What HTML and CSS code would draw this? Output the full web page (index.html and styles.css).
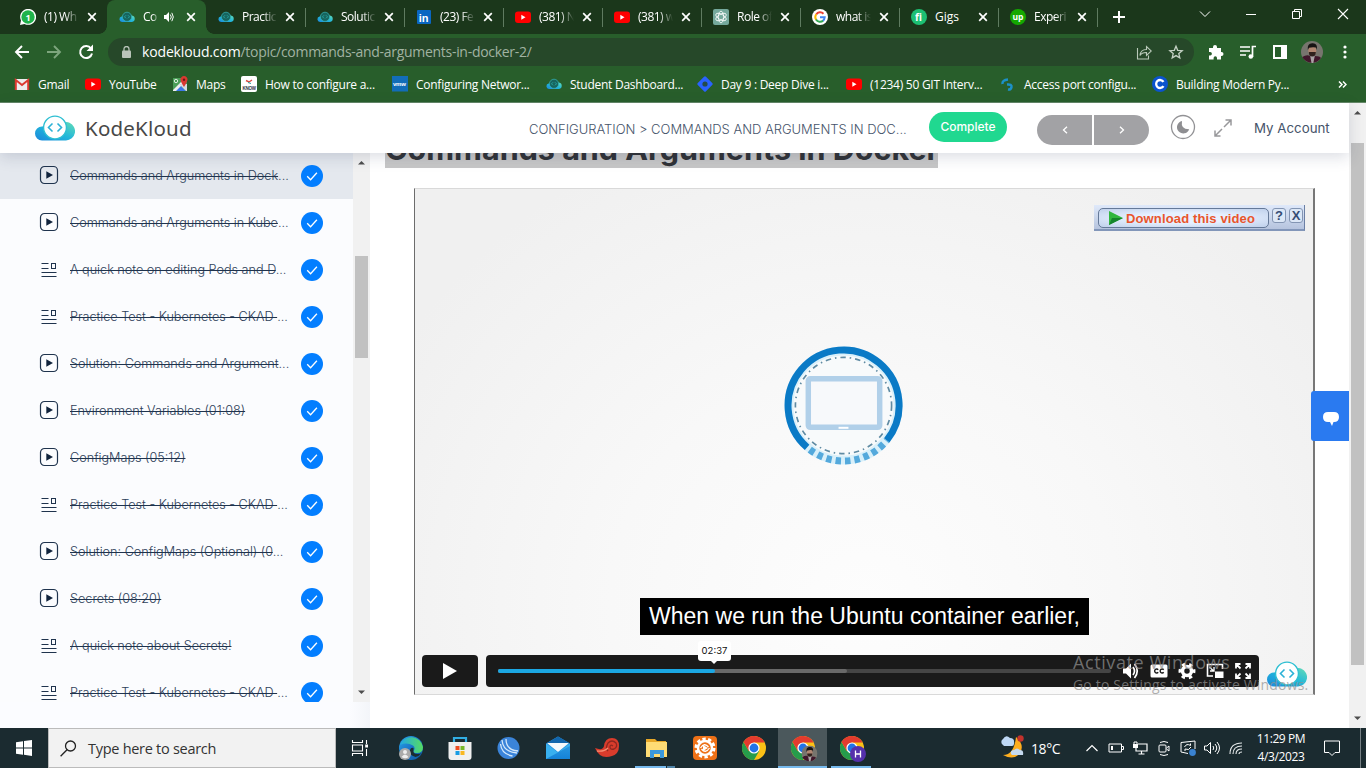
FILE: index.html
```html
<!DOCTYPE html>
<html lang="en">
<head>
<meta charset="utf-8">
<title>Commands and Arguments in Docker - KodeKloud</title>
<link rel="stylesheet" href="styles.css">
</head>
<body>
<svg class="defs" aria-hidden="true">
  <defs>
    <linearGradient id="g1" x1="0" y1="1" x2="1" y2="0"><stop offset="0" stop-color="#1b87dc"/><stop offset=".5" stop-color="#22b7da"/><stop offset="1" stop-color="#63dcb6"/></linearGradient>
    <linearGradient id="mb" x1="0" y1="0" x2="0" y2="1"><stop offset="0" stop-color="#35a5e8"/><stop offset="1" stop-color="#1583d8"/></linearGradient>
    <linearGradient id="eg" x1="0" y1="0" x2="1" y2="1"><stop offset="0" stop-color="#28a9e8"/><stop offset=".5" stop-color="#1a73c8"/><stop offset="1" stop-color="#0c59a4"/></linearGradient>
    <linearGradient id="eg2" x1="0" y1="0" x2="1" y2="0"><stop offset="0" stop-color="#22a8e4"/><stop offset="1" stop-color="#56dc62"/></linearGradient>
    <symbol id="x" viewBox="0 0 10 10"><path d="M1.200 1.200l7.600 7.600M8.800 1.200L1.200 8.800" stroke="#fff" stroke-width="1.700"/></symbol>
    <symbol id="cloud" viewBox="0 0 40 26"><path d="M7 25.500A7 7 0 0 1 7 11.500q2-.5 4 .5L29 7.500q3-1 5.500.2A9.300 9.300 0 0 1 31 25.500z" fill="url(#g1)"/><circle cx="20" cy="12.500" r="11.400" fill="#fff" stroke="#2dbfd2" stroke-width="1.300"/><path d="M17.500 8.500l-4 4 4 4M22.500 8.500l4 4-4 4" fill="none" stroke="#2bb1d6" stroke-width="1.600"/></symbol>
    <symbol id="kk" viewBox="0 0 16 12"><path d="M3 11a2.800 2.800 0 0 1-.5-5.500h1Q12 4 13 4.500a3.300 3.300 0 0 1 0 6.500z" fill="url(#g1)"/><circle cx="8" cy="5.800" r="4.600" fill="#17655f" stroke="#36b5b9" stroke-width=".7"/><path d="M7 4.300L5.500 5.800 7 7.300M9 4.300l1.500 1.500L9 7.300" fill="none" stroke="#2ab4ae" stroke-width=".8"/></symbol>
    <symbol id="yt" viewBox="0 0 16 16"><rect y="2.500" width="16" height="11.500" rx="3" fill="#f00"/><path d="M6.300 5.700l4.200 2.500-4.200 2.500z" fill="#fff"/></symbol>
    <symbol id="play" viewBox="0 0 20 20"><rect x="1.500" y="1.500" width="17" height="17" rx="4" fill="none" stroke="#1f334d" stroke-width="1.200"/><path d="M7.300 6.200l6.700 3.800-6.700 3.800z" fill="#10233c"/></symbol>
    <symbol id="note" viewBox="0 0 20 20"><path d="M2.500 4.500h7M2.500 9.500h7M2.500 13.500h15M2.500 17.500h15" stroke="#1f334d" stroke-width="1.100"/><rect x="12.500" y="4.500" width="4" height="5" fill="none" stroke="#1f334d"/></symbol>
    <symbol id="tick" viewBox="0 0 22 22"><circle cx="11" cy="11" r="11" fill="#037eff"/><path d="M6.200 11.300l3.400 3.500 6.300-7" fill="none" stroke="#fff" stroke-width="1.300"/></symbol>
    <symbol id="chrome" viewBox="0 0 24 24"><circle cx="12" cy="12" r="12" fill="#fbc116"/><path d="M1.600 6A12 12 0 0 0 12 24l5.200-9L12 12 6.800 15z" fill="#269c4b"/><path d="M1.600 6L6.800 15 12 6.500h10.600A12 12 0 0 0 1.600 6z" fill="#e33b2e"/><circle cx="12" cy="12" r="5.600" fill="#fff"/><circle cx="12" cy="12" r="4.400" fill="#2273e6"/></symbol>
    <symbol id="face" viewBox="0 0 22 22"><circle cx="11" cy="11" r="11" fill="#77756e"/><path d="M1.200 16Q6 13 9 15h5q5 0 6 2a11 11 0 0 1-18.800-1z" fill="#41172b"/><path d="M9 14l1.500 8h1.800L14 14z" fill="#a9a3a5"/><ellipse cx="11.300" cy="9.500" rx="4" ry="5.400" fill="#b08570"/><path d="M6.800 9Q6 2 11.500 2.200 17 2 15.800 9L15 6.500Q11 6 8 6.800z" fill="#171313"/><path d="M7.800 11q3.500 0 7 0 0 4.500-3.500 4.500T7.800 11z" fill="#30211d"/></symbol>
    <symbol id="up" viewBox="0 0 9 5"><path d="M1 4.500L4.500 1 8 4.500z" fill="#4d4d4d"/></symbol>
    <symbol id="down" viewBox="0 0 9 5"><path d="M1 .5h7L4.500 4z" fill="#4d4d4d"/></symbol>
  </defs>
</svg>

<div class="tabs">
  <div class="tab first"><svg class="fav" viewBox="0 0 16 16"><path d="M0 16l1-4.500A8 8 0 1 1 4.500 15z" fill="#fff"/><circle cx="8" cy="8" r="6.700" fill="#20b34b"/><text x="5.500" y="11.500" class="wa">1</text></svg><span class="label">(1) Wh</span><svg class="close"><use href="#x"/></svg></div>
  <div class="tab active"><svg class="fav"><use href="#kk"/></svg><span class="label">Co</span><svg class="speaker" viewBox="0 0 10 10"><path d="M0 3h2l3-3v10L2 7H0z" fill="#fff"/><path d="M6.300 2.500q2 2.500 0 5M7.800 .8q3 4.200 0 8.400" fill="none" stroke="#fff"/></svg><svg class="close"><use href="#x"/></svg></div>
  <div class="tab"><svg class="fav"><use href="#kk"/></svg><span class="label">Practic</span><svg class="close"><use href="#x"/></svg></div>
  <div class="tab sep"><svg class="fav"><use href="#kk"/></svg><span class="label">Solutic</span><svg class="close"><use href="#x"/></svg></div>
  <div class="tab sep"><svg class="fav" viewBox="0 0 16 16"><rect x="1" y="1" width="14" height="14" rx="1" fill="#0a66c2"/><text x="2.800" y="12.500" class="li">in</text></svg><span class="label">(23) Fe</span><svg class="close"><use href="#x"/></svg></div>
  <div class="tab sep"><svg class="fav"><use href="#yt"/></svg><span class="label">(381) N</span><svg class="close"><use href="#x"/></svg></div>
  <div class="tab sep"><svg class="fav"><use href="#yt"/></svg><span class="label">(381) w</span><svg class="close"><use href="#x"/></svg></div>
  <div class="tab sep"><svg class="fav" viewBox="0 0 16 16"><rect width="16" height="16" rx="2" fill="#75a99c"/><g fill="none" stroke="#fff" stroke-width=".8"><ellipse cx="8" cy="8" rx="2.700" ry="5.800"/><ellipse cx="8" cy="8" rx="2.700" ry="5.800" transform="rotate(60 8 8)"/><ellipse cx="8" cy="8" rx="2.700" ry="5.800" transform="rotate(120 8 8)"/></g></svg><span class="label">Role of</span><svg class="close"><use href="#x"/></svg></div>
  <div class="tab sep"><svg class="fav" viewBox="0 0 16 16"><circle cx="8" cy="8" r="8" fill="#fff"/><g fill="none" stroke-width="2"><path d="M4.200 5.500A4.700 4.700 0 0 1 11.500 4.700" stroke="#ea4335"/><path d="M4.200 5.200A5 5 0 0 0 4.200 10.800" stroke="#fbbc05"/><path d="M4 10.500A4.700 4.700 0 0 0 11.200 11.500" stroke="#34a853"/><path d="M8 8.200h4.700Q12.500 10.500 11 11.700" stroke="#4285f4"/></g></svg><span class="label">what is</span><svg class="close"><use href="#x"/></svg></div>
  <div class="tab sep"><svg class="fav" viewBox="0 0 16 16"><circle cx="8" cy="8" r="8" fill="#1dbf73"/><text x="4" y="12" class="badge">fi</text></svg><span class="label">Gigs</span><svg class="close"><use href="#x"/></svg></div>
  <div class="tab sep"><svg class="fav" viewBox="0 0 16 16"><circle cx="8" cy="8" r="8" fill="#14a800"/><text x="2.500" y="10.500" class="badge small">up</text></svg><span class="label">Experi</span><svg class="close"><use href="#x"/></svg></div>
  <div class="newtab sep"><svg width="12" height="12" viewBox="0 0 12 12"><path d="M6 0v12M0 6h12" stroke="#fff" stroke-width="2"/></svg></div>
  <div class="wincontrols">
    <svg viewBox="0 0 12 12"><path d="M1 3.500l5 5 5-5" fill="none" stroke="#fff"/></svg>
    <svg viewBox="0 0 12 12"><path d="M1 6.500h10" stroke="#fff"/></svg>
    <svg viewBox="0 0 12 12"><path d="M1.500 3.500h7v7h-7zM3.500 3.500v-2h7v7h-2" fill="none" stroke="#fff"/></svg>
    <svg viewBox="0 0 12 12"><path d="M1 1l10 10M11 1L1 11" stroke="#fff" stroke-width="1.100"/></svg>
  </div>
</div>

<div class="toolbar">
  <svg class="nav" viewBox="0 0 16 16"><path d="M15 8H2M8 2L2 8l6 6" fill="none" stroke="#fff" stroke-width="1.900"/></svg>
  <svg class="nav" viewBox="0 0 16 16"><path d="M1 8h13M8 2l6 6-6 6" fill="none" stroke="#7da57d" stroke-width="1.900"/></svg>
  <svg class="nav" viewBox="0 0 16 16"><path d="M13 4.500A6 6 0 1 0 14 9.500" fill="none" stroke="#fff" stroke-width="2"/><path d="M15 .5V7H8.500z" fill="#fff"/></svg>
  <div class="omnibox">
    <svg class="lock" viewBox="0 0 10 12"><rect y="4.500" width="9" height="7.500" rx="1" fill="#b9c4b9"/><path d="M2 5V3a2.500 2.500 0 0 1 5 0v2" fill="none" stroke="#b9c4b9" stroke-width="1.300"/></svg>
    <span class="url"><b>kodekloud.com</b>/topic/commands-and-arguments-in-docker-2/</span>
    <svg class="oi" viewBox="0 0 16 16"><path d="M1.500 4v11h11v-3.500M4 11.500q.5-6 6.500-6V2.500l4.800 4.500-4.800 4.500V8.500Q6 8.300 4 11.500z" fill="none" stroke="#b9c9b9" stroke-width="1.100"/></svg>
    <svg class="oi" viewBox="0 0 16 16"><path d="M8 2.200l1.700 4.100 4.500.4-3.400 2.900 1 4.300L8 11.600l-3.800 2.300 1-4.300-3.400-2.900 4.500-.4z" fill="none" stroke="#c5d2c5" stroke-width="1.300"/></svg>
  </div>
  <svg class="ext" viewBox="0 0 16 16"><path d="M1 4h4V3a2 2 0 0 1 4 0v1h4v4h.5a2 2 0 0 1 0 4H13v3.500H9V14a1.700 1.700 0 0 0-3.400 0v1.500H1v-4h1.200a1.700 1.700 0 0 0 0-3.400H1z" fill="#fff"/></svg>
  <svg class="ext" viewBox="0 0 16 16"><path d="M0 3h10M0 7h10M0 11h6M12.500 13V2.500H16" fill="none" stroke="#fff" stroke-width="1.700"/><circle cx="10.800" cy="12.500" r="2.300" fill="#fff"/></svg>
  <svg class="ext" viewBox="0 0 16 16"><path d="M1 1h14v14H1zM3 3v10h6V3z" fill="#fff" fill-rule="evenodd"/></svg>
  <svg class="avatar"><use href="#face"/></svg>
  <svg class="dots" viewBox="0 0 4 16"><circle cx="2" cy="3" r="1.600" fill="#fff"/><circle cx="2" cy="8" r="1.600" fill="#fff"/><circle cx="2" cy="13" r="1.600" fill="#fff"/></svg>
</div>

<div class="bookmarks">
  <div class="bm"><svg viewBox="0 0 16 16"><rect x="1" y="3" width="14" height="11" fill="#eee"/><path d="M1.800 14V4L8 9l6.200-5v10" fill="none" stroke="#db3a30" stroke-width="2"/></svg><span>Gmail</span></div>
  <div class="bm"><svg><use href="#yt"/></svg><span>YouTube</span></div>
  <div class="bm"><svg viewBox="0 0 16 16"><path d="M1 2h14v13H1z" fill="#4b9e58"/><path d="M2 15l6-6 6 6z" fill="#3b78e7"/><path d="M1 14L10 5l2 2-8 8H1z" fill="#eee"/><path d="M7 8l7 7h1V8z" fill="#d5dbe0"/><path d="M12 0a3.500 3.500 0 0 1 3.500 3.800Q15 7 12 11 9 7 8.500 3.800A3.500 3.500 0 0 1 12 0z" fill="#d93930"/><circle cx="12" cy="3.700" r="1.200" fill="#6c1915"/><circle cx="4" cy="5" r="1.700" fill="none" stroke="#fff" stroke-width=".8"/></svg><span>Maps</span></div>
  <div class="bm"><svg viewBox="0 0 16 16"><rect width="16" height="16" rx="2" fill="#fff"/><path d="M5 4.500l3 1.500 3-2" stroke="#d84b43" stroke-width="1.500" fill="none"/><path d="M7 6.500l3 1" stroke="#229b95"/><text x="1.500" y="13.500" class="know">KNOW</text></svg><span>How to configure a...</span></div>
  <div class="bm"><svg viewBox="0 0 16 16"><rect width="16" height="15.500" fill="#126db8"/><text x="1" y="10" class="vmw">vmw</text></svg><span>Configuring Networ...</span></div>
  <div class="bm"><svg><use href="#kk"/></svg><span>Student Dashboard...</span></div>
  <div class="bm"><svg viewBox="0 0 16 16"><path d="M7 .8Q8-.2 9 .8L15.200 7q1 1 0 2L9 15.200q-1 1-2 0L.8 9Q-.2 8 .8 7z" fill="#2962ff"/><circle cx="8" cy="8" r="2.600" fill="#244b4b"/></svg><span>Day 9 : Deep Dive i...</span></div>
  <div class="bm"><svg><use href="#yt"/></svg><span>(1234) 50 GIT Interv...</span></div>
  <div class="bm"><svg viewBox="0 0 16 16"><path d="M2.500 8Q2 4 8 3.500M7 8.500q5-.5 4.500 2.500T8 13.500" stroke="#1c91c9" stroke-width="2.500" fill="none"/></svg><span>Access port configu...</span></div>
  <div class="bm"><svg viewBox="0 0 16 16"><circle cx="8" cy="8" r="8" fill="#0a53ce"/><path d="M11.500 5.800A4 4 0 1 0 11.500 10.200" fill="none" stroke="#fff" stroke-width="2.300"/></svg><span>Building Modern Py...</span></div>
  <div class="more"><svg width="9" height="7" viewBox="0 0 9 7"><path d="M1 .5l3 3-3 3M5 .5l3 3-3 3" fill="none" stroke="#fff" stroke-width="1.500"/></svg></div>
</div>

<div class="page">
  <div class="site">
    <header class="header">
      <svg class="logo"><use href="#cloud"/></svg>
      <span class="brand">KodeKloud</span>
      <span class="crumb">CONFIGURATION &gt; COMMANDS AND ARGUMENTS IN DOC...</span>
      <span class="complete">Complete</span>
      <span class="pn prev"><svg viewBox="0 0 6 8"><path d="M5 .7L1.500 4 5 7.300" fill="none" stroke="#fff" stroke-width="1.300"/></svg></span>
      <span class="pn next"><svg viewBox="0 0 6 8"><path d="M1 .7L4.500 4 1 7.300" fill="none" stroke="#fff" stroke-width="1.300"/></svg></span>
      <svg class="moon" viewBox="0 0 26 26"><circle cx="13" cy="13" r="11.500" fill="none" stroke="#929295" stroke-width="1.300"/><path d="M12 7a6.300 6.300 0 1 0 7.200 8.300Q10.500 15.500 12 7z" fill="#8e8e91"/></svg>
      <svg class="expand" viewBox="0 0 18 18"><path d="M10 8l7-7M11.500 1H17v5.500M8 10l-7 7M1 11.500V17h5.500" fill="none" stroke="#98989b" stroke-width="1.500"/></svg>
      <span class="account">My Account</span>
    </header>
    <div class="content">
      <aside class="sidebar">
        <div class="lessons">
          <ul class="list">
            <li class="current"><svg class="kind"><use href="#play"/></svg><span class="t"><s>Commands and Arguments in Dock</s>...</span><svg class="tick"><use href="#tick"/></svg></li>
            <li><svg class="kind"><use href="#play"/></svg><span class="t"><s>Commands and Arguments in Kube</s>...</span><svg class="tick"><use href="#tick"/></svg></li>
            <li><svg class="kind"><use href="#note"/></svg><span class="t"><s>A quick note on editing Pods and D</s>...</span><svg class="tick"><use href="#tick"/></svg></li>
            <li><svg class="kind"><use href="#note"/></svg><span class="t"><s>Practice Test - Kubernetes - CKAD </s>...</span><svg class="tick"><use href="#tick"/></svg></li>
            <li><svg class="kind"><use href="#play"/></svg><span class="t"><s>Solution: Commands and Argument</s>...</span><svg class="tick"><use href="#tick"/></svg></li>
            <li><svg class="kind"><use href="#play"/></svg><span class="t"><s>Environment Variables (01:08)</s></span><svg class="tick"><use href="#tick"/></svg></li>
            <li><svg class="kind"><use href="#play"/></svg><span class="t"><s>ConfigMaps (05:12)</s></span><svg class="tick"><use href="#tick"/></svg></li>
            <li><svg class="kind"><use href="#note"/></svg><span class="t"><s>Practice Test - Kubernetes - CKAD </s>...</span><svg class="tick"><use href="#tick"/></svg></li>
            <li><svg class="kind"><use href="#play"/></svg><span class="t"><s>Solution: ConfigMaps (Optional) (0</s>...</span><svg class="tick"><use href="#tick"/></svg></li>
            <li><svg class="kind"><use href="#play"/></svg><span class="t"><s>Secrets (08:20)</s></span><svg class="tick"><use href="#tick"/></svg></li>
            <li><svg class="kind"><use href="#note"/></svg><span class="t"><s>A quick note about Secrets!</s></span><svg class="tick"><use href="#tick"/></svg></li>
            <li><svg class="kind"><use href="#note"/></svg><span class="t"><s>Practice Test - Kubernetes - CKAD </s>...</span><svg class="tick"><use href="#tick"/></svg></li>
          </ul>
          <div class="scroll inner"><svg class="arr"><use href="#up"/></svg><div class="thumb"></div><svg class="arr end"><use href="#down"/></svg></div>
        </div>
      </aside>
      <main class="main">
        <div class="titlebox"><h1>Commands and Arguments in Docker</h1></div>
        <div class="video">
          <svg class="art" viewBox="0 0 120 120">
            <circle cx="60" cy="60" r="55" fill="#f8fafb" stroke="#d9f0fa" stroke-width="9"/>
            <path d="M23.300 102.200A56 56 0 1 1 103.600 95.200" fill="none" stroke="#0a7ac6" stroke-width="7"/>
            <path d="M26 104.500A56 56 0 0 0 103.600 95.200" fill="none" stroke="#54a9dc" stroke-width="7" stroke-dasharray="5.500 4"/>
            <circle cx="60" cy="60" r="48.500" fill="none" stroke="#5f8ba3" stroke-width="1.700" stroke-dasharray="5.500 4 1.500 4"/>
            <rect x="24.500" y="33" width="72" height="49" rx="2" fill="#f7f9fb" stroke="#b1d0e9" stroke-width="5.500"/><path d="M55 82.500h10" stroke="#fff" stroke-width="2"/>
          </svg>
          <div class="download">
            <div class="dl"><svg viewBox="0 0 14 14"><path d="M0 0l14 7L0 14z" fill="#30b63e"/><path d="M3 7h11L0 14z" fill="#15852c"/></svg><span>Download this video</span></div>
            <span class="sq">?</span><span class="sq">X</span>
          </div>
          <div class="caption">When we run the Ubuntu container earlier,</div>
          <div class="controls">
            <div class="playbtn"><svg viewBox="0 0 14 16"><path d="M0 0l14 8L0 16z" fill="#fff"/></svg></div>
            <div class="bar">
              <div class="track"><div class="loaded"></div><div class="played"></div><div class="time">02:37</div></div>
              <svg viewBox="0 0 18 18"><path d="M1 6.500h3l5-5v15l-5-5H1z" fill="#fff"/><path d="M11 5q3 4 0 8M12.500 2q5.500 7 0 14" fill="none" stroke="#fff" stroke-width="1.700"/></svg>
              <svg viewBox="0 0 18 18"><rect x=".5" y="2.500" width="17" height="13" rx="1.500" fill="#fff"/><path d="M8.200 7.700a2 2 0 1 0 0 2.600M13.700 7.700a2 2 0 1 0 0 2.600" fill="none" stroke="#1a1a1a" stroke-width="1.400"/></svg>
              <svg viewBox="0 0 18 18"><circle cx="9" cy="9" r="4.500" fill="none" stroke="#fff" stroke-width="3.500"/><circle cx="9" cy="9" r="7" fill="none" stroke="#fff" stroke-width="3" stroke-dasharray="3.500 3.830" transform="rotate(-14 9 9)"/></svg>
              <svg viewBox="0 0 18 18"><path d="M7 14H1.500V2.500h15V7" fill="none" stroke="#fff" stroke-width="1.600"/><path d="M9 9.500h8.500V16H9z" fill="#fff"/><path d="M3.500 5l4 4M8 5v4H4" stroke="#fff" fill="none" stroke-width="1.300"/></svg>
              <svg viewBox="0 0 18 18"><path d="M2 6.500V2h4.500M11.500 2H16v4.500M16 11.500V16h-4.500M6.500 16H2v-4.500M2 2l4.500 4.500M16 2l-4.500 4.500M16 16l-4.500-4.500M2 16l4.500-4.500" fill="none" stroke="#fff" stroke-width="1.800"/></svg>
            </div>
            <svg class="vlogo"><use href="#cloud"/></svg>
          </div>
        </div>
      </main>
    </div>
    <div class="chat"><svg viewBox="0 0 16 15"><path d="M5 0h6q5 0 5 5t-5 5H10.500L9 14 7 10H5Q0 10 0 5t5-5z" fill="#fff"/></svg></div>
  </div>
  <div class="scroll outer"><svg class="arr"><use href="#up"/></svg><div class="thumb"></div><svg class="arr end"><use href="#down"/></svg></div>
  <div class="activate"><div class="a1">Activate Windows</div><div class="a2">Go to Settings to activate Windows.</div></div>
</div>

<div class="taskbar">
  <div class="start"><svg width="16" height="16" viewBox="0 0 16 16"><path d="M0 2.300l7-1v6.300H0zM8 1.100L16 0v7.600H8zM0 8.500h7v6.300l-7-1zM8 8.500h8V16l-8-1.200z" fill="#fff"/></svg></div>
  <div class="search"><svg width="17" height="17" viewBox="0 0 17 17"><circle cx="10.500" cy="6" r="5" fill="none" stroke="#222" stroke-width="1.300"/><path d="M7 9.800L.6 16.300" stroke="#222" stroke-width="1.300"/></svg><span>Type here to search</span></div>
  <div class="apps">
    <div class="app"><svg class="tv" viewBox="0 0 16 16"><path d="M.5 0v2.500h10V0M.5 5h10v6H.5zM.5 16v-2.500h10V16M14.500 0v4M14.500 9v7" fill="none" stroke="#fff" stroke-width="1.100"/><rect x="13.200" y="4.500" width="2.800" height="3" fill="#fff"/></svg></div>
    <div class="app"><svg viewBox="0 0 24 24"><circle cx="12" cy="12" r="12" fill="url(#eg)"/><path d="M1 9A12 12 0 0 1 24 11q0 6-6 6-4 0-3.500-2 2.500-3-.5-5.500Q8 6 1 9z" fill="url(#eg2)"/><path d="M14.500 14q-1 4 4 4 3 0 4-1-2 3-6 4-7-2-5.500-7 1-3 3.500-2z" fill="#1b2c31"/><circle cx="6" cy="18" r="6" fill="#aaa"/><circle cx="6" cy="16" r="2" fill="#eee"/><path d="M2.500 21q3.500-5 7 0-3 2.500-7 0z" fill="#eee"/></svg></div>
    <div class="app"><svg viewBox="0 0 24 24"><path d="M6 7V2h12v5" fill="none" stroke="#31aee3" stroke-width="2.200"/><path d="M.5 6h23v15q0 3-3 3h-17q-3 0-3-3z" fill="#f0f0f0"/><path d="M7.500 10h4v4h-4z" fill="#ef4e23"/><path d="M12.500 10h4v4h-4z" fill="#79b829"/><path d="M7.500 15h4v4h-4z" fill="#199de4"/><path d="M12.500 15h4v4h-4z" fill="#f9b820"/></svg></div>
    <div class="app"><svg viewBox="0 0 24 24"><circle cx="11.500" cy="12" r="11" fill="#3b84d9"/><path d="M5 4q1 12 15 13M9 3q0 11 12 12M3.500 8q1 10 12 12" fill="none" stroke="#d4e8fb" stroke-width="1.300"/></svg></div>
    <div class="app"><svg viewBox="0 0 24 24"><path d="M0 7.500l12-7 12 7V23H0z" fill="url(#mb)"/><path d="M0 7.500l12-7 12 7-1 .5H1z" fill="#1266ad"/><path d="M1 7h22L12 16z" fill="#f5f9fc"/><path d="M0 7.500l12 9 12-9V10L0 23z" fill="#39b0ef"/></svg></div>
    <div class="app"><svg viewBox="0 0 24 24"><path d="M0 12q8 3 9-2 1-8 8-8t7 8-7 10Q5 24 0 12z" fill="#d93c2c"/><path d="M18 10q-3-2-3 1t4 2q4-2 2-6-4-4-8 0-3 5 0 8" fill="none" stroke="#8d2820" stroke-width="1.300"/><path d="M2 15q7 1 11-3" fill="none" stroke="#f58d72" stroke-width="1.300"/></svg></div>
    <div class="app folder"><svg viewBox="0 0 24 24"><path d="M2 3h9l2 2h9v4H2z" fill="#e8a828"/><path d="M2 6h21v15H2z" fill="#ffdc75"/><path d="M6 22v-8h14v8h-4v-4h-6v4z" fill="#3b98dc"/></svg></div>
    <div class="app"><svg viewBox="0 0 24 24"><rect width="24" height="24" rx="4" fill="#ee7117"/><circle cx="12" cy="12" r="9" fill="none" stroke="#fff" stroke-width="3" stroke-dasharray="3.300 2.350"/><circle cx="12" cy="12" r="7" fill="#ee7117" stroke="#fff" stroke-width="2.500"/><path d="M7.500 12q4-6 8-1M16.500 12q-4 6-8 1" fill="none" stroke="#fff" stroke-width="1.300"/><path d="M10 9l5 3-5 3z" fill="#fff"/></svg></div>
    <div class="app"><svg><use href="#chrome"/></svg></div>
    <div class="app on"><svg viewBox="0 0 24 24"><use href="#chrome" width="24" height="24"/><use href="#face" x="10.500" y="9.500" width="16" height="16"/></svg></div>
    <div class="app run"><svg viewBox="0 0 24 24"><use href="#chrome" width="24" height="24"/><circle cx="18" cy="18" r="8" fill="#5530ab"/><path d="M15.500 14.500v7M20.500 14.500v7M15.500 18h5" stroke="#fff" stroke-width="1.300"/></svg></div>
  </div>
  <div class="tray">
    <svg class="weather" viewBox="0 0 25 24"><path d="M17 2q9 8 4 16-6 8-17 2 11 0 13-18z" fill="#ffae1f"/><circle cx="21.500" cy="3.500" r="3.200" fill="#c3322c"/><path d="M4 10a3.500 3.500 0 0 1 0-6Q7-1 11 3q5 0 4 6 0 2-2 2H5z" fill="#bed8f5"/><path d="M12 19q-1-4 3-4 3-3 6 0 4 0 3 5H13z" fill="#c5d9ef"/></svg>
    <span class="temp">18°C</span>
    <svg class="ti" viewBox="0 0 16 16"><path d="M2.500 11L8 5.500l5.500 5.500" fill="none" stroke="#fff" stroke-width="1.200"/></svg>
    <svg class="ti" viewBox="0 0 16 16"><path d="M1 4h12.500v8H1zM14 6.500h1.500v3H14" fill="none" stroke="#fff"/><path d="M3 6h2v4H3z" fill="#fff"/></svg>
    <svg class="ti" viewBox="0 0 16 16"><path d="M6 4h9v7H4V8M9.500 11v3M6.500 14h6" fill="none" stroke="#fff" stroke-width="1.200"/><path d="M1 4h5v4H1z" fill="#fff"/><path d="M2 4V2h3v2" stroke="#fff" fill="none"/></svg>
    <svg class="ti" viewBox="0 0 16 16"><rect x="3" y="5" width="7" height="7" rx="1" fill="none" stroke="#fff"/><path d="M10.500 8l2.500-2v5l-2.500-2M4 2.500Q8 .5 12 2.500M4 14.500q4 2 8 0" fill="none" stroke="#fff"/></svg>
    <svg class="ti" viewBox="0 0 16 16"><path d="M1 2.500L15 1v8M1 2.500V12l7 1.500" fill="none" stroke="#fff"/><path d="M4.500 7q2-4 6-1.500V3.500M11 7q-2 4-6 2v2" fill="none" stroke="#fff"/><circle cx="12.500" cy="12.500" r="3.400" fill="#3a82d0"/></svg>
    <svg class="ti" viewBox="0 0 16 16"><path d="M.5 6H3l3.500-3.500v11L3 10H.5zM9 6q1.500 2 0 4M11 4q3.500 4 0 8M13 2q5 6 0 12" fill="none" stroke="#fff"/></svg>
    <svg class="ti" viewBox="0 0 16 16"><path d="M2 14Q2 3 14 3M5 14q0-8 9-8M8 14q0-5 6-5M11 14q0-2 3-2" fill="none" stroke="#e8eced" stroke-width="1.100"/></svg>
    <div class="clock"><div>11:29 PM</div><div>4/3/2023</div></div>
    <svg class="notif" viewBox="0 0 16 16"><path d="M.5 1h15v11.500H11L8 15.500 5 12.500H.5z" fill="none" stroke="#fff"/></svg>
    <div class="peek"></div>
  </div>
</div>
</body>
</html>
```
FILE: styles.css
```css
* { box-sizing: border-box; }
body { margin: 0; width: 1366px; height: 768px; overflow: hidden; display: flex; flex-direction: column; font-family: "Open Sans", "Noto Sans", sans-serif; font-size: 12px; background: #fff; }
svg { display: block; flex: none; }
.defs { position: absolute; width: 0; height: 0; }

/* tab strip */
.tabs { height: 34px; flex: none; background: #1b371b; display: flex; padding-left: 8px; color: #fff; }
.tab { width: 99px; flex: none; height: 34px; display: flex; align-items: center; padding-left: 12px; position: relative; }
.tab.active { background: #285e2b; border-radius: 8px 8px 0 0; }
.tab.active::before, .tab.active::after { content: ""; position: absolute; bottom: 0; width: 8px; height: 8px; }
.tab.active::before { left: -8px; background: radial-gradient(circle at 0 0, transparent 7.5px, #285e2b 8px); }
.tab.active::after { right: -8px; background: radial-gradient(circle at 100% 0, transparent 7.5px, #285e2b 8px); }
.fav { width: 16px; height: 16px; margin-right: 8px; }
.label { width: 35px; height: 18px; line-height: 18px; overflow: hidden; white-space: nowrap; letter-spacing: -0.5px; -webkit-mask-image: linear-gradient(90deg, #000 60%, transparent); mask-image: linear-gradient(90deg, #000 60%, transparent); }
.tab.active .label { width: 16px; }
.tab:nth-child(10) .label { -webkit-mask-image: none; mask-image: none; letter-spacing: 0; }
.speaker { width: 10px; height: 10px; margin: 0 4px 0 5px; }
.close { width: 10px; height: 10px; margin-left: 8px; }
.sep::before { content: ""; position: absolute; left: 0; top: 8px; width: 1px; height: 19px; background: #5f7b60; }
.newtab { width: 44px; height: 34px; display: flex; align-items: center; justify-content: center; position: relative; }
.wincontrols { margin-left: auto; display: flex; gap: 34px; padding: 8px 17px 0 0; }
.wincontrols svg { width: 12px; height: 12px; }
.wa { font: 700 9px "Open Sans", sans-serif; fill: #fff; }
.li { font: 700 11px "Liberation Sans", sans-serif; fill: #fff; }
.badge { font: 700 10px "Open Sans", sans-serif; fill: #fff; }
.badge.small { font-size: 8.5px; }

/* address bar */
.toolbar { height: 36px; flex: none; background: #285e2b; display: flex; align-items: center; padding-left: 14px; }
.nav { width: 16px; height: 16px; margin-right: 16px; }
.omnibox { width: 1086px; height: 28px; margin-left: -2px; border-radius: 14px; background: #264829; display: flex; align-items: center; padding: 0 10px 0 14px; }
.lock { width: 10px; height: 12px; margin-right: 10px; }
.url { flex: 1; font-size: 14px; letter-spacing: -0.29px; color: #a1b3a2; line-height: 20px; }
.url b { font-weight: 400; color: #fff; letter-spacing: -0.15px; }
.oi { width: 16px; height: 16px; margin-left: 16px; }
.ext { width: 16px; height: 16px; margin-left: 16px; }
.omnibox + .ext { margin-left: 14px; }
.avatar { width: 22px; height: 22px; margin-left: 13px; }
.dots { width: 4px; height: 16px; margin-left: 20px; }

/* bookmarks */
.bookmarks { height: 33px; flex: none; background: #285e2b; border-bottom: 1px solid #648767; padding: 0 0 4px 14px; display: grid; grid-template-columns: 71px 87px 69px 151px 154px 151px 149px 154px 152px 180px 1fr; align-items: center; color: #fff; }
.bm { display: flex; align-items: center; gap: 8px; white-space: nowrap; letter-spacing: -0.26px; }
.bm svg { width: 16px; height: 16px; }
.more { padding-left: 6px; }
.know { font: 700 4.5px "Liberation Sans", sans-serif; fill: #334; }
.vmw { font: 700 6px "Liberation Sans", sans-serif; fill: #fff; }

/* page */
.page { flex: 1; min-height: 0; display: flex; position: relative; }
.site { width: 1349px; display: flex; flex-direction: column; position: relative; font-family: Inter, sans-serif; }
.header { height: 50px; flex: none; background: #fff; display: flex; padding-left: 35px; box-shadow: 0 4px 14px rgba(40, 55, 90, .17); position: relative; z-index: 2; color: #46546a; white-space: nowrap; }
.logo { width: 40px; height: 26px; margin: 12px 10px 0 0; }
.brand { width: 444px; font: 400 20.5px/50px "Noto Sans", sans-serif; color: #484848; letter-spacing: .2px; }
.crumb { width: 400px; font-size: 13px; line-height: 53px; font-weight: 300; letter-spacing: -0.03px; }
.complete { width: 78px; height: 30px; margin-top: 9px; border-radius: 15px; background: #20d890; color: #fff; text-align: center; font-size: 12px; font-weight: 500; line-height: 30px; }
.pn { height: 30px; margin-top: 12px; width: 55px; background: #a2a2a5; display: flex; align-items: center; justify-content: center; }
.pn svg { width: 6px; height: 8px; }
.prev { margin-left: 30px; border-radius: 15px 0 0 15px; }
.next { margin-left: 2px; border-radius: 0 15px 15px 0; }
.moon { width: 26px; height: 26px; margin: 11px 0 0 21px; }
.expand { width: 18px; height: 18px; margin: 16px 0 0 18px; }
.account { margin-left: 22px; font-size: 13.3px; line-height: 51px; }
.content { flex: 1; min-height: 0; display: flex; }
.sidebar { width: 370px; flex: none; background: linear-gradient(90deg, #fbfcff 0, #fbfcff 350px, #f3f5f9 370px); }
.lessons { height: 549px; display: flex; overflow: hidden; }
.list { width: 353px; margin: -1px 0 0; padding: 0; list-style: none; }
.list li { height: 47px; padding: 1px 0 0 39px; display: flex; align-items: center; color: #2d4059; background: #fbfcfe; }
.list li.current { background: #e4e8ee; }
.kind { width: 20px; height: 20px; margin-right: 11px; margin-top: -2px; }
.t { width: 231px; font-size: 12.65px; font-weight: 300; white-space: nowrap; line-height: 18px; }
.t s { text-decoration-thickness: 1.2px; text-decoration-color: #1f334d; }
.tick { width: 22px; height: 22px; }
.scroll { width: 17px; background: #f1f1f1; display: flex; flex-direction: column; align-items: center; }
.thumb { width: 13px; background: #c1c1c1; }
.arr { width: 9px; height: 5px; }
.inner { padding: 7px 0 7px; }
.inner .thumb { height: 102px; margin-top: 91px; }
.arr.end { margin-top: auto; }
.outer { padding: 7px 0 7px; }
.outer .thumb { height: 522px; margin-top: 28px; }

.main { flex: 1; padding-left: 15px; background: #fff; }
.titlebox { height: 35px; }
.titlebox h1 { margin: 0; width: 553px; height: 15px; background: #c7c7c7; color: #303236; font-size: 30.5px; line-height: 38px; font-weight: 700; white-space: nowrap; display: flex; align-items: flex-end; overflow: hidden; }
.video { width: 901px; height: 507px; margin-left: 29px; border: 1px solid #d9d9d9; border-left-color: #6c6c6c; border-right: 2px solid #777; background: radial-gradient(ellipse at 50% 82%, #fdfdfd 0, #f8f8f8 40%, #f0f0f0 85%); position: relative; }
.art { position: absolute; left: 369px; top: 157px; width: 119px; height: 119px; }
.download { position: absolute; left: 679px; top: 16px; width: 211px; height: 26px; background: linear-gradient(#dfe9fa, #b6c4de); border-right: 1px solid #6b7fa4; border-bottom: 2px solid #8296b9; padding: 3px 0 0 4px; display: flex; gap: 3px; }
.dl { width: 171px; height: 20px; border: 1px solid #657998; border-radius: 5px; background: radial-gradient(#e6f0ff 40%, #c5d5ee 90%); display: flex; align-items: center; padding-left: 10px; gap: 3px; color: #e9552c; font: 700 13px "Liberation Sans", sans-serif; letter-spacing: .14px; white-space: nowrap; }
.dl svg { width: 14px; height: 14px; }
.sq { width: 14px; height: 15px; border: 1px solid #8395b3; border-radius: 3px; background: #dce7f6; color: #354c73; font: 700 13px/14px "Liberation Sans", sans-serif; text-align: center; }
.caption { position: absolute; left: 225px; top: 409px; width: 449px; height: 37px; background: #000; color: #fff; font: 23px/36px "Liberation Sans", sans-serif; text-align: center; white-space: nowrap; }
.controls { position: absolute; left: 7px; top: 466px; display: flex; gap: 8px; }
.playbtn { width: 56px; height: 32px; border-radius: 4px; background: #1a1a1a; display: flex; align-items: center; justify-content: center; }
.playbtn svg { width: 14px; height: 16px; }
.bar { width: 773px; height: 32px; border-radius: 4px; background: #1a1a1a; display: flex; align-items: center; padding-left: 12px; gap: 10px; }
.bar > svg { width: 18px; height: 18px; }
.track { width: 613px; height: 4px; border-radius: 2px; background: #454545; position: relative; margin-right: 1px; }
.loaded, .played { position: absolute; left: 0; top: 0; height: 4px; border-radius: 2px; }
.loaded { width: 349px; background: #696969; }
.played { width: 217px; background: #1ba7e3; }
.time { position: absolute; left: 200px; top: -28px; width: 33px; height: 20px; border-radius: 3px; background: #fff; color: #111; font: 9.5px/19px Inter, sans-serif; text-align: center; }
.time::after { content: ""; position: absolute; left: 12px; top: 19px; border: 4px solid transparent; border-top-color: #fff; border-bottom: 0; }
.vlogo { width: 40px; height: 26px; margin-top: 6px; }
.chat { position: absolute; right: 0; top: 288px; width: 38px; height: 50px; border-radius: 3px 0 0 3px; background: #2a7af0; display: flex; align-items: center; justify-content: center; padding: 6px 0 0 2px; }
.chat svg { width: 16px; height: 15px; }
.activate { position: absolute; left: 1073px; top: 547px; z-index: 3; color: rgba(145, 145, 145, .72); white-space: nowrap; }
.a1 { font-size: 18px; line-height: 24px; letter-spacing: .6px; }
.a2 { font-size: 14px; line-height: 21px; letter-spacing: .17px; }

/* taskbar */
.taskbar { height: 40px; flex: none; background: #1b2b30; display: flex; color: #fff; }
.start { width: 48px; display: flex; align-items: center; justify-content: center; }
.search { width: 288px; background: #f2f2f2; border: 1px solid #bbb; display: flex; align-items: center; gap: 11px; padding-left: 11px; color: #333; font-size: 14.5px; letter-spacing: -0.28px; }
.apps { display: flex; padding-left: 1px; }
.app { width: 49px; display: flex; align-items: center; justify-content: center; position: relative; }
.app svg { width: 24px; height: 24px; overflow: visible; }
.app .tv { width: 16px; height: 16px; margin-right: 4px; }
.app.on { background: #4b585c; }
.on::after, .run::after, .folder::after { content: ""; position: absolute; left: 0; right: 0; bottom: 0; height: 2px; background: #76b9ed; }
.run::after, .folder::after { left: 4px; right: 5px; }
.folder::after { background: linear-gradient(90deg, #76b9ed 31px, #1b2b30 31px, #1b2b30 32px, #5084a8 32px); }
.tray { flex: 1; display: flex; align-items: center; position: relative; padding-left: 123px; }
.weather { width: 25px; height: 24px; margin-top: -2px; }
.temp { width: 53px; margin-left: 7px; font-size: 14px; letter-spacing: -0.4px; }
.ti { width: 16px; height: 16px; margin-right: 8px; }
.ti:nth-child(9) { margin-right: 5px; }
.clock { width: 60px; margin-left: 2px; text-align: center; line-height: 18px; letter-spacing: -0.4px; margin-top: -1px; }
.notif { width: 16px; height: 16px; margin-left: 13px; }
.peek { width: 1px; height: 40px; background: #768084; margin-left: 20px; }
```
